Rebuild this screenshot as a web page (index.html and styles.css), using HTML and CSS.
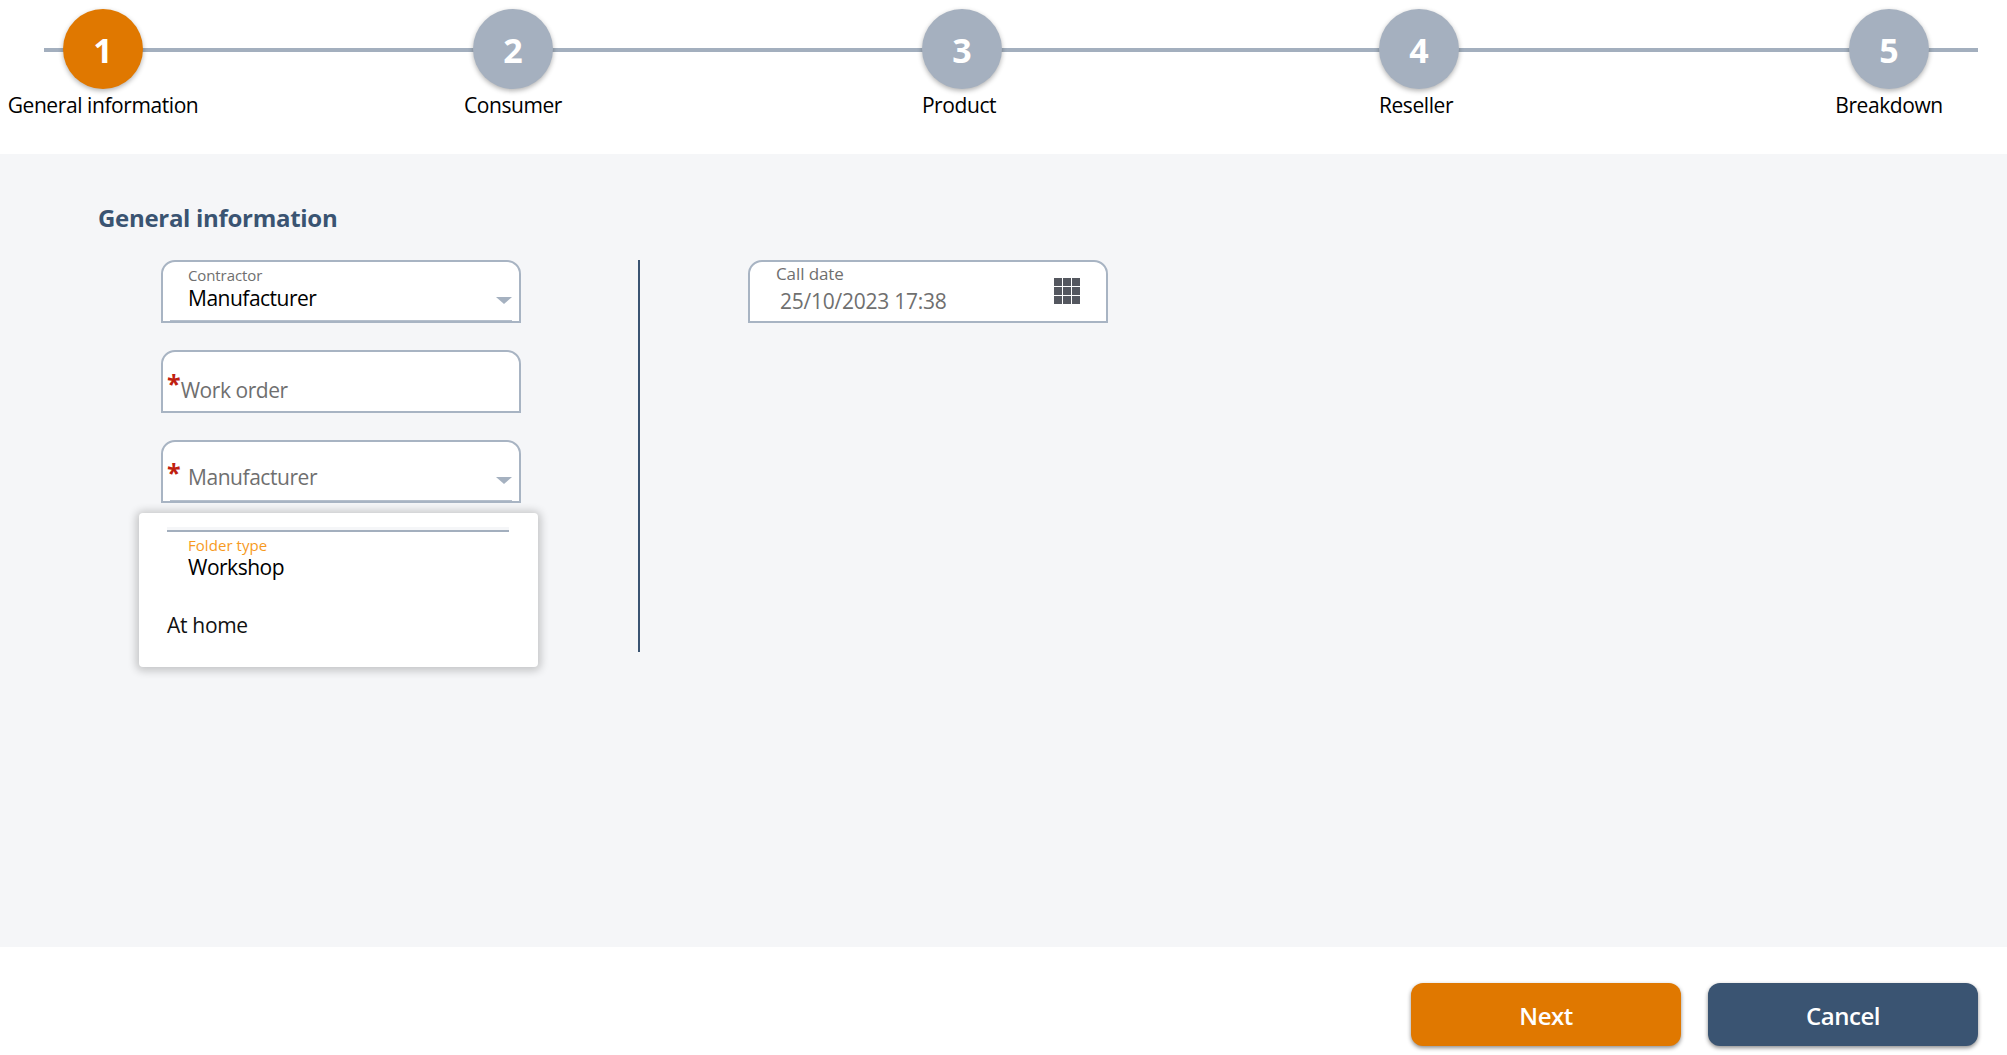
FILE: index.html
```html
<!DOCTYPE html>
<html lang="en">
<head>
<meta charset="utf-8">
<title>General information</title>
<link rel="stylesheet" href="styles.css">
</head>
<body>
<div class="page">
  <header class="stepper">
    <div class="step active"><div class="circle">1</div><div class="step-label">General information</div></div>
    <div class="step"><div class="circle">2</div><div class="step-label">Consumer</div></div>
    <div class="step"><div class="circle">3</div><div class="step-label shift">Product</div></div>
    <div class="step"><div class="circle">4</div><div class="step-label shift">Reseller</div></div>
    <div class="step"><div class="circle">5</div><div class="step-label">Breakdown</div></div>
  </header>
  <main class="content">
    <h1 class="section-title">General information</h1>
    <div class="form">
      <div class="col-left">
        <div class="field select">
          <div class="small-label">Contractor</div>
          <div class="value">Manufacturer</div>
          <span class="arrow"></span>
        </div>
        <div class="field input">
          <span class="star">*</span><span class="placeholder">Work order</span>
        </div>
        <div class="field select required">
          <span class="star abs">*</span>
          <div class="placeholder">Manufacturer</div>
          <span class="arrow"></span>
        </div>
        <div class="popup">
          <div class="popup-line"></div>
          <div class="popup-current">
            <div class="small-label orange">Folder type</div>
            <div class="value">Workshop</div>
          </div>
          <div class="popup-option">At home</div>
        </div>
      </div>
      <div class="divider"></div>
      <div class="col-right">
        <div class="field date">
          <div class="date-text">
            <div class="date-label">Call date</div>
            <div class="date-value">25/10/2023 17:38</div>
          </div>
          <svg class="grid-icon" width="26" height="26" viewBox="0 0 26 26" aria-hidden="true">
            <g fill="#54575f">
              <rect x="0" y="0" width="8" height="8"/><rect x="9" y="0" width="8" height="8"/><rect x="18" y="0" width="8" height="8"/>
              <rect x="0" y="9" width="8" height="8"/><rect x="9" y="9" width="8" height="8"/><rect x="18" y="9" width="8" height="8"/>
              <rect x="0" y="18" width="8" height="8"/><rect x="9" y="18" width="8" height="8"/><rect x="18" y="18" width="8" height="8"/>
            </g>
          </svg>
        </div>
      </div>
    </div>
  </main>
  <footer class="footer">
    <button class="btn next">Next</button>
    <button class="btn cancel">Cancel</button>
  </footer>
</div>
</body>
</html>
```
FILE: styles.css
```css
* { box-sizing: border-box; }
html, body { margin: 0; padding: 0; }
body {
  font-family: "Open Sans", "Noto Sans", "Liberation Sans", sans-serif;
  color: #000;
  background: #fff;
  overflow: hidden;
}
.page { width: 2007px; height: 1055px; display: flex; flex-direction: column; }

/* stepper */
.stepper {
  position: relative;
  height: 154px;
  flex: none;
  padding: 9px 0 0 8px;
  display: grid;
  grid-template-columns: 410px 449px 457px 470px 190px;
  align-items: start;
  background: #fff;
}
.stepper::before {
  content: "";
  position: absolute;
  left: 44px;
  top: 48px;
  width: 1934px;
  height: 4px;
  background: #a3afbe;
}
.step { position: relative; width: 190px; display: flex; flex-direction: column; align-items: center; }
.circle {
  width: 80px;
  height: 80px;
  border-radius: 50%;
  background: #a5b0bf;
  color: #fff;
  font-size: 34px;
  font-weight: 700;
  line-height: 83px;
  text-align: center;
  box-shadow: 0 2px 5px rgba(0,0,0,.3);
}
.active .circle { background: #e07800; }
.step-label { font-size: 21px; line-height: 28px; margin-top: 2px; white-space: nowrap; letter-spacing: -0.42px; }
.step-label.shift { margin-right: 6px; }

/* main */
.content {
  flex: 1;
  background: #f5f6f8;
  padding: 47px 0 0 98px;
}
.section-title {
  margin: 0;
  font-size: 24px;
  line-height: 34px;
  font-weight: 700;
  color: #3a5472;
  letter-spacing: -0.3px;
}
.form {
  display: flex;
  margin-top: 25px;
  padding-left: 63px;
  align-items: flex-start;
}
.col-left {
  position: relative;
  width: 360px;
  display: flex;
  flex-direction: column;
  gap: 27px;
}
.divider { width: 2px; height: 392px; background: #3a5472; margin-left: 117px; }
.col-right { margin-left: 108px; width: 360px; }

.field {
  position: relative;
  height: 63px;
  background: #fff;
  border: 2px solid #a8b4c3;
  border-radius: 14px 14px 0 0;
}
.select { padding: 3px 0 0 25px; }
.select::after {
  content: "";
  position: absolute;
  left: 7px;
  right: 7px;
  bottom: 0;
  height: 1px;
  background: #b5bfcc;
}
.small-label { font-size: 15px; line-height: 20px; color: #6f6f6f; letter-spacing: -0.1px; }
.small-label.orange { color: #f79a1e; letter-spacing: 0.05px; }
.value { font-size: 21px; line-height: 26px; color: #000; letter-spacing: -0.5px; }
.placeholder { font-size: 21px; line-height: 28px; color: #6f6f6f; letter-spacing: -0.45px; }
.arrow {
  position: absolute;
  right: 7px;
  top: 35px;
  width: 0;
  height: 0;
  border-left: 8px solid transparent;
  border-right: 8px solid transparent;
  border-top: 7px solid #a5b1c0;
}
.star { color: #c0200f; font-size: 25px; font-weight: 700; line-height: 28px; }
.input { padding: 22px 0 0 4px; }
.input .star { position: relative; top: -5px; }
.required { padding: 21px 0 0 25px; }
.star.abs { position: absolute; left: 4px; top: 16px; }

/* popup */
.popup {
  position: absolute;
  left: -22px;
  top: 253px;
  width: 399px;
  height: 154px;
  background: #fff;
  border-radius: 4px;
  box-shadow: 0 1px 8px 3px rgba(0,0,0,.2);
  padding-top: 14px;
}
.popup-line {
  margin-left: 28px;
  width: 342px;
  height: 5px;
  background: #f5f6f8;
  border-bottom: 2px solid #a3afbe;
  border-bottom-left-radius: 0;
}
.popup-current { padding: 3px 0 0 49px; }
.popup-current .value { margin-top: -1px; }
.popup-option { font-size: 21px; line-height: 28px; margin: 31px 0 0 28px; color: #111; letter-spacing: -0.3px; }

/* date */
.date { display: flex; justify-content: space-between; align-items: flex-start; padding: 0 26px 0 26px; }
.date-label { font-size: 17px; line-height: 24px; color: #6f6f6f; letter-spacing: -0.1px; }
.date-value { font-size: 21px; line-height: 28px; color: #6f6f6f; padding-left: 4px; margin-top: 1px; letter-spacing: -0.25px; }
.grid-icon { margin-top: 16px; }

/* footer */
.footer {
  height: 108px;
  flex: none;
  background: #fff;
  display: flex;
  justify-content: flex-end;
  gap: 27px;
  padding: 36px 29px 0 0;
}
.btn {
  width: 270px;
  height: 63px;
  border: none;
  border-radius: 12px;
  color: #fff;
  font-family: inherit;
  font-size: 24px;
  font-weight: 600;
  letter-spacing: -0.5px;
  padding: 2px 0 0;
  box-shadow: 0 2px 4px rgba(0,0,0,.45);
}
.next { background: #e07800; }
.cancel { background: #3a5472; }
```
